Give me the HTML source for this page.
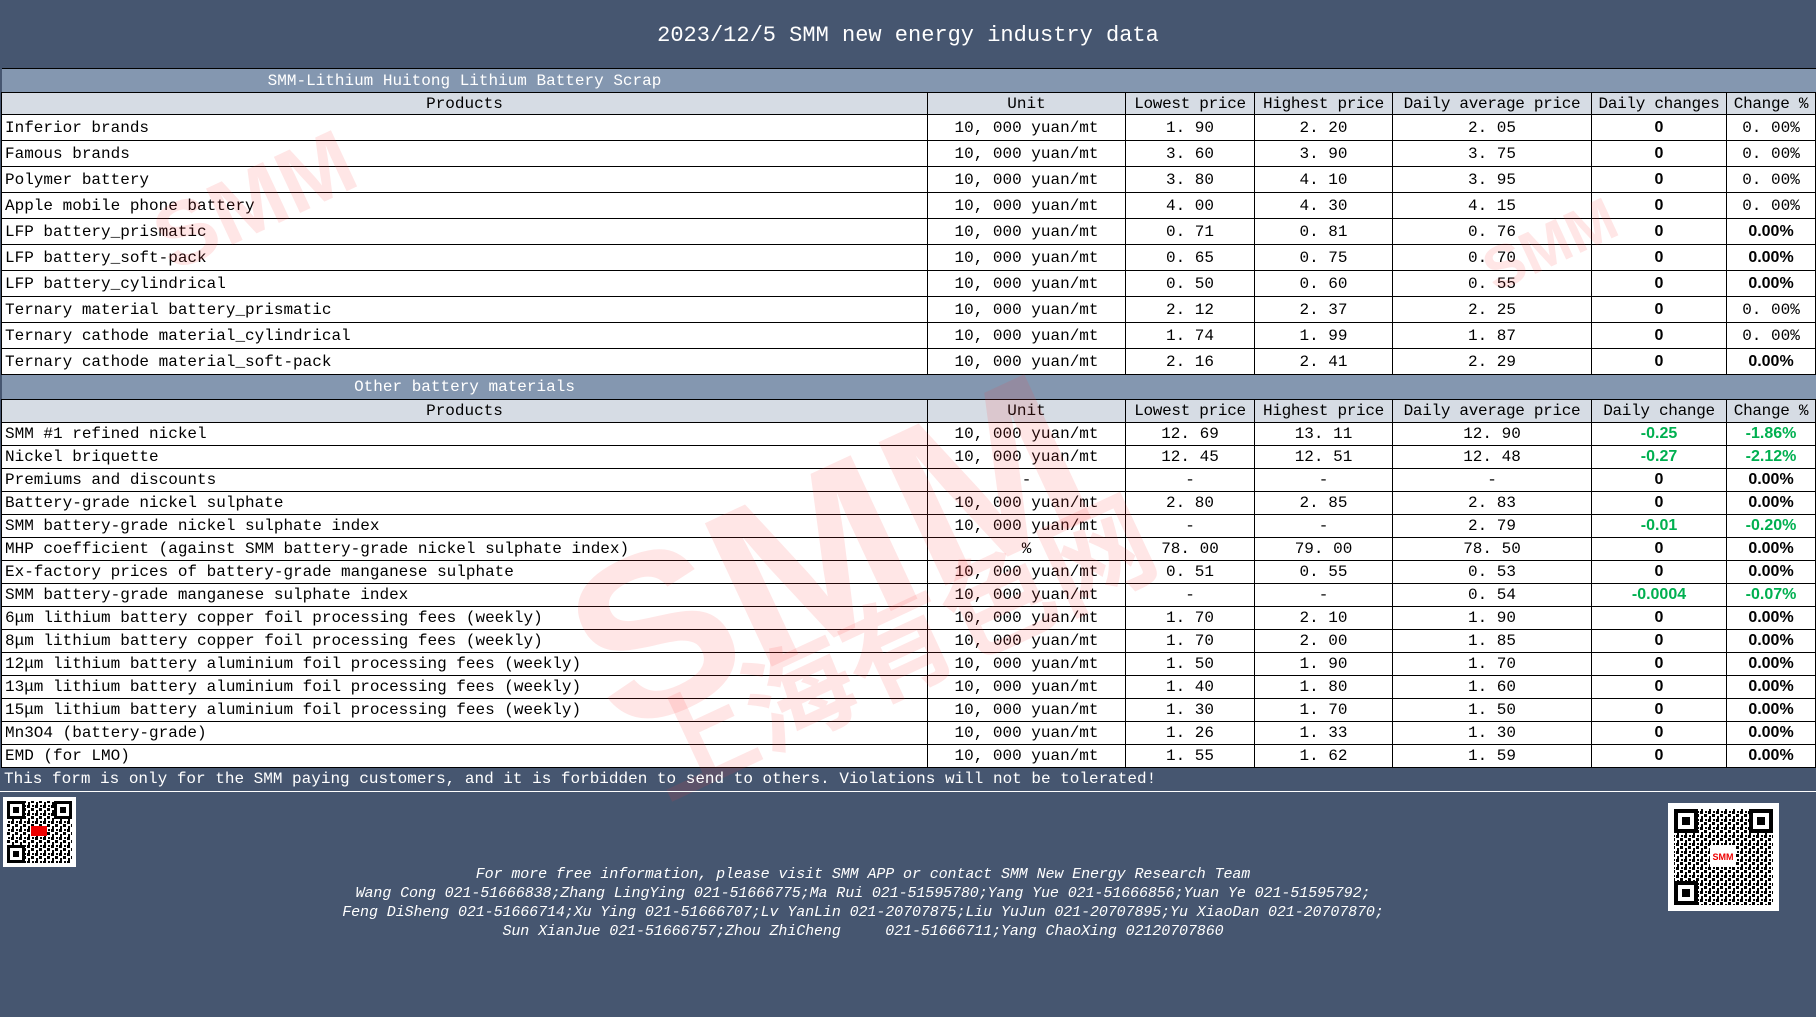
<!DOCTYPE html>
<html><head><meta charset="utf-8"><style>
html,body{margin:0;padding:0;}
body{width:1816px;height:1017px;background:#465670;position:relative;overflow:hidden;font-family:"Liberation Mono","Noto Sans CJK SC",monospace;}
.title{position:absolute;left:0;top:0;width:1816px;height:69px;line-height:72px;text-align:center;color:#fff;font-size:22px;}
table{position:absolute;left:1px;top:68px;width:1814px;border-collapse:collapse;table-layout:fixed;font-size:16px;color:#000;}
td{border:1px solid #000;padding:0 3px;white-space:nowrap;overflow:hidden;background:#fff;}
tr.sec td{background:#8497b0;color:#fff;border-left:none;border-right:none;}
tr.hd td{background:#d6dce4;text-align:center;}
tr.hd td.c{letter-spacing:-0.3px;}
tr.r1 td{height:25px;}
tr.r2 td{height:22px;}
td.u,td.n{text-align:center;}
td.b{text-align:center;font-family:"Liberation Sans",sans-serif;font-weight:bold;font-size:16px;}
td.g{color:#00b050;}
td.m{text-align:center;}
.note{position:absolute;left:4px;top:768px;height:23px;line-height:23px;color:#fff;font-size:16px;}
.line{position:absolute;left:0;top:791px;width:1816px;height:1px;background:#fff;}
.foot{position:absolute;left:0;width:1726px;text-align:center;color:#fff;font-style:italic;font-size:15px;font-family:"Liberation Mono",monospace;letter-spacing:-0.1px;white-space:pre;}
.wm{position:absolute;color:rgba(255,60,60,0.13);font-family:"Liberation Sans","Noto Sans CJK SC",sans-serif;font-weight:bold;transform:rotate(-25deg);pointer-events:none;}
</style></head><body>
<div class="title">2023/12/5 SMM new energy industry data</div>
<table>
<colgroup><col style="width:926px"><col style="width:198px"><col style="width:129px"><col style="width:138px"><col style="width:199px"><col style="width:135px"><col style="width:89px"></colgroup>
<tr class="sec"><td style="height:23px;text-align:center">SMM-Lithium Huitong Lithium Battery Scrap</td><td colspan="6"></td></tr>
<tr class="hd"><td style="height:21px">Products</td><td>Unit</td><td class="c">Lowest price</td><td class="c">Highest price</td><td class="c">Daily average price</td><td class="c">Daily changes</td><td class="c">Change %</td></tr>
<tr class="r1"><td>Inferior brands</td><td class="u">10, 000 yuan/mt</td><td class="n">1. 90</td><td class="n">2. 20</td><td class="n">2. 05</td><td class="b">0</td><td class="m">0. 00%</td></tr>
<tr class="r1"><td>Famous brands</td><td class="u">10, 000 yuan/mt</td><td class="n">3. 60</td><td class="n">3. 90</td><td class="n">3. 75</td><td class="b">0</td><td class="m">0. 00%</td></tr>
<tr class="r1"><td>Polymer battery</td><td class="u">10, 000 yuan/mt</td><td class="n">3. 80</td><td class="n">4. 10</td><td class="n">3. 95</td><td class="b">0</td><td class="m">0. 00%</td></tr>
<tr class="r1"><td>Apple mobile phone battery</td><td class="u">10, 000 yuan/mt</td><td class="n">4. 00</td><td class="n">4. 30</td><td class="n">4. 15</td><td class="b">0</td><td class="m">0. 00%</td></tr>
<tr class="r1"><td>LFP battery_prismatic</td><td class="u">10, 000 yuan/mt</td><td class="n">0. 71</td><td class="n">0. 81</td><td class="n">0. 76</td><td class="b">0</td><td class="b">0.00%</td></tr>
<tr class="r1"><td>LFP battery_soft-pack</td><td class="u">10, 000 yuan/mt</td><td class="n">0. 65</td><td class="n">0. 75</td><td class="n">0. 70</td><td class="b">0</td><td class="b">0.00%</td></tr>
<tr class="r1"><td>LFP battery_cylindrical</td><td class="u">10, 000 yuan/mt</td><td class="n">0. 50</td><td class="n">0. 60</td><td class="n">0. 55</td><td class="b">0</td><td class="b">0.00%</td></tr>
<tr class="r1"><td>Ternary material battery_prismatic</td><td class="u">10, 000 yuan/mt</td><td class="n">2. 12</td><td class="n">2. 37</td><td class="n">2. 25</td><td class="b">0</td><td class="m">0. 00%</td></tr>
<tr class="r1"><td>Ternary cathode material_cylindrical</td><td class="u">10, 000 yuan/mt</td><td class="n">1. 74</td><td class="n">1. 99</td><td class="n">1. 87</td><td class="b">0</td><td class="m">0. 00%</td></tr>
<tr class="r1"><td>Ternary cathode material_soft-pack</td><td class="u">10, 000 yuan/mt</td><td class="n">2. 16</td><td class="n">2. 41</td><td class="n">2. 29</td><td class="b">0</td><td class="b">0.00%</td></tr>
<tr class="sec"><td style="height:24px;text-align:center">Other battery materials</td><td colspan="6"></td></tr>
<tr class="hd"><td style="height:22px">Products</td><td>Unit</td><td class="c">Lowest price</td><td class="c">Highest price</td><td class="c">Daily average price</td><td class="c">Daily change</td><td class="c">Change %</td></tr>
<tr class="r2"><td>SMM #1 refined nickel</td><td class="u">10, 000 yuan/mt</td><td class="n">12. 69</td><td class="n">13. 11</td><td class="n">12. 90</td><td class="b g">-0.25</td><td class="b g">-1.86%</td></tr>
<tr class="r2"><td>Nickel briquette</td><td class="u">10, 000 yuan/mt</td><td class="n">12. 45</td><td class="n">12. 51</td><td class="n">12. 48</td><td class="b g">-0.27</td><td class="b g">-2.12%</td></tr>
<tr class="r2"><td>Premiums and discounts</td><td class="u">-</td><td class="n">-</td><td class="n">-</td><td class="n">-</td><td class="b">0</td><td class="b">0.00%</td></tr>
<tr class="r2"><td>Battery-grade nickel sulphate</td><td class="u">10, 000 yuan/mt</td><td class="n">2. 80</td><td class="n">2. 85</td><td class="n">2. 83</td><td class="b">0</td><td class="b">0.00%</td></tr>
<tr class="r2"><td>SMM battery-grade nickel sulphate index</td><td class="u">10, 000 yuan/mt</td><td class="n">-</td><td class="n">-</td><td class="n">2. 79</td><td class="b g">-0.01</td><td class="b g">-0.20%</td></tr>
<tr class="r2"><td>MHP coefficient (against SMM battery-grade nickel sulphate index)</td><td class="u">%</td><td class="n">78. 00</td><td class="n">79. 00</td><td class="n">78. 50</td><td class="b">0</td><td class="b">0.00%</td></tr>
<tr class="r2"><td>Ex-factory prices of battery-grade manganese sulphate</td><td class="u">10, 000 yuan/mt</td><td class="n">0. 51</td><td class="n">0. 55</td><td class="n">0. 53</td><td class="b">0</td><td class="b">0.00%</td></tr>
<tr class="r2"><td>SMM battery-grade manganese sulphate index</td><td class="u">10, 000 yuan/mt</td><td class="n">-</td><td class="n">-</td><td class="n">0. 54</td><td class="b g">-0.0004</td><td class="b g">-0.07%</td></tr>
<tr class="r2"><td>6μm lithium battery copper foil processing fees (weekly)</td><td class="u">10, 000 yuan/mt</td><td class="n">1. 70</td><td class="n">2. 10</td><td class="n">1. 90</td><td class="b">0</td><td class="b">0.00%</td></tr>
<tr class="r2"><td>8μm lithium battery copper foil processing fees (weekly)</td><td class="u">10, 000 yuan/mt</td><td class="n">1. 70</td><td class="n">2. 00</td><td class="n">1. 85</td><td class="b">0</td><td class="b">0.00%</td></tr>
<tr class="r2"><td>12μm lithium battery aluminium foil processing fees (weekly)</td><td class="u">10, 000 yuan/mt</td><td class="n">1. 50</td><td class="n">1. 90</td><td class="n">1. 70</td><td class="b">0</td><td class="b">0.00%</td></tr>
<tr class="r2"><td>13μm lithium battery aluminium foil processing fees (weekly)</td><td class="u">10, 000 yuan/mt</td><td class="n">1. 40</td><td class="n">1. 80</td><td class="n">1. 60</td><td class="b">0</td><td class="b">0.00%</td></tr>
<tr class="r2"><td>15μm lithium battery aluminium foil processing fees (weekly)</td><td class="u">10, 000 yuan/mt</td><td class="n">1. 30</td><td class="n">1. 70</td><td class="n">1. 50</td><td class="b">0</td><td class="b">0.00%</td></tr>
<tr class="r2"><td>Mn3O4 (battery-grade)</td><td class="u">10, 000 yuan/mt</td><td class="n">1. 26</td><td class="n">1. 33</td><td class="n">1. 30</td><td class="b">0</td><td class="b">0.00%</td></tr>
<tr class="r2"><td>EMD (for LMO)</td><td class="u">10, 000 yuan/mt</td><td class="n">1. 55</td><td class="n">1. 62</td><td class="n">1. 59</td><td class="b">0</td><td class="b">0.00%</td></tr>
</table>
<div class="wm" style="left:560px;top:420px;font-size:230px;">SMM</div>
<div class="wm" style="left:620px;top:560px;font-size:110px;">上海有色网</div>
<div class="wm" style="left:150px;top:150px;font-size:90px;">SMM</div>
<div class="wm" style="left:1480px;top:210px;font-size:60px;">SMM</div>
<div class="note">This form is only for the SMM paying customers, and it is forbidden to send to others. Violations will not be tolerated!</div>
<div class="line"></div>
<svg style="position:absolute;left:3px;top:797px" width="73" height="70" viewBox="0 0 73 70">
<defs><pattern id="q" width="8" height="8" patternUnits="userSpaceOnUse"><rect width="8" height="8" fill="#fff"/><rect x="0" y="0" width="3" height="3" fill="#000"/><rect x="4" y="3" width="3" height="3" fill="#000"/><rect x="1" y="5" width="2" height="3" fill="#000"/><rect x="5" y="0" width="2" height="2" fill="#000"/></pattern></defs>
<rect width="73" height="70" fill="#fff"/><rect x="4" y="4" width="65" height="62" fill="url(#q)"/>
<rect x="4" y="4" width="18" height="18" fill="#000"/><rect x="7" y="7" width="12" height="12" fill="#fff"/><rect x="10" y="10" width="6" height="6" fill="#000"/>
<rect x="51" y="4" width="18" height="18" fill="#000"/><rect x="54" y="7" width="12" height="12" fill="#fff"/><rect x="57" y="10" width="6" height="6" fill="#000"/>
<rect x="4" y="48" width="18" height="18" fill="#000"/><rect x="7" y="51" width="12" height="12" fill="#fff"/><rect x="10" y="54" width="6" height="6" fill="#000"/>
<rect x="28" y="29" width="16" height="10" fill="#e00"/></svg>
<svg style="position:absolute;left:1668px;top:803px" width="111" height="108" viewBox="0 0 111 108">
<rect width="111" height="108" fill="#fff"/><rect x="6" y="6" width="99" height="96" fill="url(#q)"/>
<rect x="6" y="6" width="24" height="24" fill="#000"/><rect x="10" y="10" width="16" height="16" fill="#fff"/><rect x="14" y="14" width="8" height="8" fill="#000"/>
<rect x="81" y="6" width="24" height="24" fill="#000"/><rect x="85" y="10" width="16" height="16" fill="#fff"/><rect x="89" y="14" width="8" height="8" fill="#000"/>
<rect x="6" y="78" width="24" height="24" fill="#000"/><rect x="10" y="82" width="16" height="16" fill="#fff"/><rect x="14" y="86" width="8" height="8" fill="#000"/>
<rect x="42" y="42" width="26" height="22" fill="#fff"/><text x="55" y="57" font-size="9" fill="#e00" text-anchor="middle" font-family="Liberation Sans" font-weight="bold">SMM</text></svg>
<div class="foot" style="top:866px">For more free information, please visit SMM APP or contact SMM New Energy Research Team</div>
<div class="foot" style="top:885px">Wang Cong 021-51666838;Zhang LingYing 021-51666775;Ma Rui 021-51595780;Yang Yue 021-51666856;Yuan Ye 021-51595792;</div>
<div class="foot" style="top:904px">Feng DiSheng 021-51666714;Xu Ying 021-51666707;Lv YanLin 021-20707875;Liu YuJun 021-20707895;Yu XiaoDan 021-20707870;</div>
<div class="foot" style="top:923px">Sun XianJue 021-51666757;Zhou ZhiCheng     021-51666711;Yang ChaoXing 02120707860</div>
</body></html>
